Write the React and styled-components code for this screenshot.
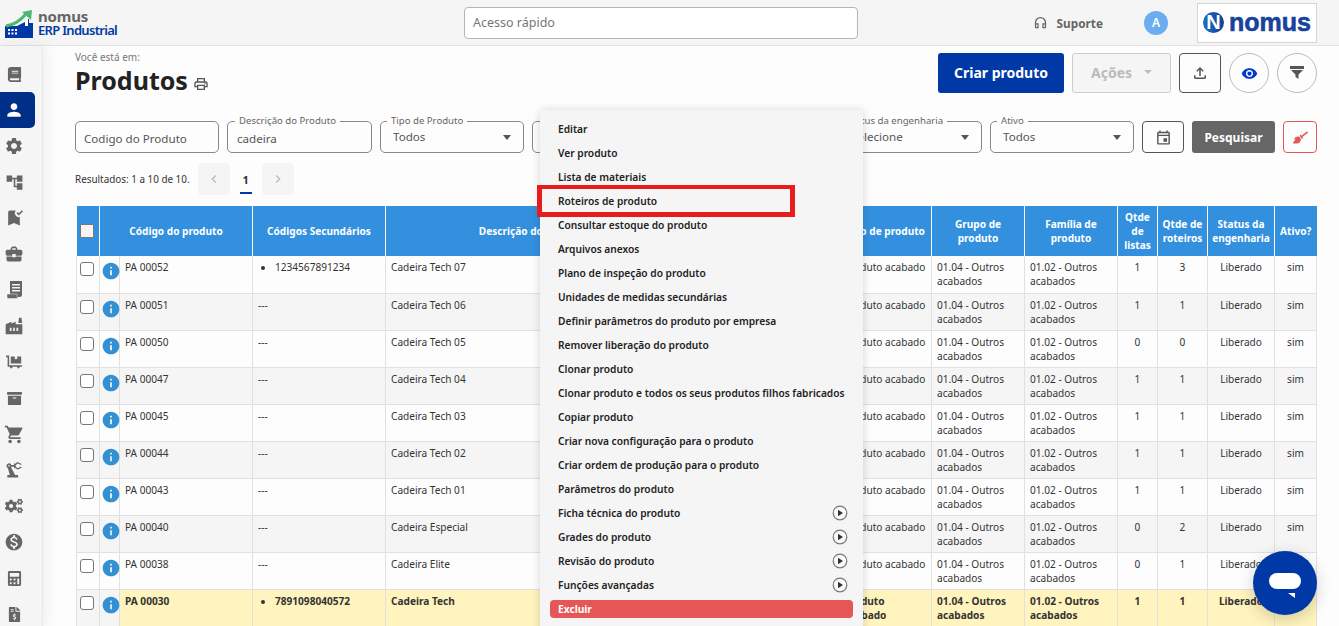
import styled, { createGlobalStyle } from "styled-components";
import {
  MdPerson,
  MdSettings,
  MdAccountTree,
  MdBookmarkAdded,
  MdBusinessCenter,
  MdFactory,
  MdShoppingCart,
  MdPrecisionManufacturing,
  MdMonetizationOn,
  MdOutlineHeadphones,
  MdOutlineFileUpload,
  MdVisibility,
  MdOutlineEvent,
  MdChevronLeft,
  MdChevronRight,
  MdOutlinePrint,
  MdInfo,
} from "react-icons/md";
import {
  FaBook,
  FaArchive,
  FaDollyFlatbed,
  FaCogs,
  FaCalculator,
  FaFileInvoiceDollar,
  FaBroom,
} from "react-icons/fa";

const blue = "#0039a6";
const font = `"Noto Sans", "Open Sans", sans-serif`;

const GlobalStyle = createGlobalStyle`
    html, body {
        margin: 0;
        padding: 0;
        overflow: hidden;
        background: #fdfdfd;
        font-family: ${font};
        color: #333;
    }
    * {
        box-sizing: border-box;
    }
`;

const Page = styled.div`
    position: relative;
    width: 1339px;
    height: 626px;
    overflow: hidden;
`;
const Header = styled.header`
    display: flex;
    align-items: center;
    height: 46px;
    padding: 0 22px 0 5px;
    background: #f5f5f5;
    border-bottom: 1px solid #e2e2e2;
`;
const Brand = styled.div`
    display: flex;
    align-items: center;
    gap: 5px;
    width: 459px;
    margin-top: 2px;
`;
const BrandText = styled.div`
    display: flex;
    flex-direction: column;
`;
const BrandName = styled.span`
    font-size: 15px;
    font-weight: 700;
    line-height: 13px;
    color: #666;
    letter-spacing: -0.2px;
`;
const BrandSub = styled.span`
    font-size: 13px;
    font-weight: 600;
    line-height: 14px;
    color: ${blue};
    letter-spacing: -0.7px;
`;
const QuickAccess = styled.div`
    width: 394px;
    height: 32px;
    padding: 0 0 1px 8px;
    display: flex;
    align-items: center;
    background: #fff;
    border: 1px solid #b5b5b5;
    border-radius: 4px;
    font-size: 12.5px;
    color: #777;
`;
const HeaderRight = styled.div`
    margin-left: auto;
    display: flex;
    align-items: center;
`;
const Support = styled.div`
    display: flex;
    align-items: center;
    gap: 9px;
    font-size: 11.8px;
    font-weight: 700;
    color: #666;
    svg {
        font-size: 15px;
    }
`;
const Avatar = styled.div`
    width: 24px;
    height: 24px;
    margin: 0 29px 0 41px;
    display: flex;
    align-items: center;
    justify-content: center;
    border-radius: 50%;
    background: #6aaef0;
    color: #fff;
    font-size: 12px;
    font-weight: 600;
`;
const CompanyLogo = styled.div`
    width: 120px;
    height: 40px;
    display: flex;
    align-items: center;
    gap: 5px;
    padding-left: 5px;
    background: #fff;
    border: 1px solid #d5d5d5;
`;
const LogoMark = styled.span`
    width: 21px;
    height: 21px;
    display: flex;
    align-items: center;
    justify-content: center;
    border-radius: 50%;
    background: linear-gradient(90deg, #1c6fc0, #123f94);
    color: #fff;
    font-family: "Liberation Sans", sans-serif;
    font-size: 20px;
    font-weight: 700;
`;
const LogoWord = styled.span`
    font-family: "Liberation Sans", sans-serif;
    font-size: 25px;
    font-weight: 700;
    color: #17439b;
    -webkit-text-stroke: 0.6px #17439b;
`;

const Body = styled.div`
    display: flex;
    height: 580px;
`;
const Sidebar = styled.nav`
    flex: 0 0 43px;
    padding-top: 10px;
    background: #f5f5f5;
    border-right: 1px solid #e8e8e8;
    box-shadow: 4px 0 14px rgba(0, 0, 0, 0.06);
    z-index: 1;
`;
const SideItem = styled.div`
    width: 35px;
    height: 36px;
    padding-right: 7px;
    display: flex;
    align-items: center;
    justify-content: center;
    font-size: ${(props) => props.$size || 18}px;
    color: ${(props) => (props.$active ? "#fff" : "#666")};
    background: ${(props) => (props.$active ? "#002f87" : "transparent")};
    border-radius: 0 5px 5px 0;
`;
const Main = styled.main`
    flex: 1;
    min-width: 0;
    padding: 7px 22px 0 32px;
    background: #fdfdfd;
`;
const PageHead = styled.div`
    display: flex;
    justify-content: space-between;
    height: 68px;
`;
const Crumb = styled.div`
    font-size: 10px;
    line-height: 9px;
    color: #777;
`;
const Title = styled.h1`
    margin: 1px 0 0;
    display: flex;
    align-items: center;
    gap: 5px;
    font-size: 25px;
    line-height: 34px;
    font-weight: 700;
    color: #222;
    svg {
        font-size: 16px;
        color: #555;
        margin-top: 7px;
    }
`;
const Actions = styled.div`
    display: flex;
    gap: 8px;
    height: 40px;
`;
const PrimaryButton = styled.button`
    width: 126px;
    padding: 0 0 2px;
    border: 0;
    border-radius: 3px;
    background: ${blue};
    color: #fff;
    font: 700 14px ${font};
`;
const DisabledButton = styled.button`
    width: 99px;
    padding: 0 0 2px;
    display: flex;
    align-items: center;
    justify-content: center;
    gap: 12px;
    border: 1px solid #ccc;
    border-radius: 3px;
    background: #f5f5f5;
    color: #bbb;
    font: 700 14px ${font};
`;
const IconButton = styled.button`
    width: ${(props) => props.$w || 42}px;
    height: ${(props) => props.$h || 40}px;
    padding: 0;
    display: flex;
    align-items: center;
    justify-content: center;
    background: transparent;
    border: 1px solid ${(props) => props.$line || "#555"};
    border-radius: ${(props) => (props.$round ? "50%" : "4px")};
    color: ${(props) => props.$color || "#555"};
    font-size: ${(props) => props.$size || 18}px;
`;

const Filters = styled.div`
    display: flex;
    gap: 8px;
    height: 32px;
`;
const Field = styled.div`
    position: relative;
    flex: 0 0 ${(props) => props.$w}px;
    height: 32px;
    display: flex;
    align-items: center;
    padding-left: ${(props) => props.$pad || 8}px;
    padding-top: ${(props) => (props.$select ? 0 : 2)}px;
    padding-bottom: ${(props) => (props.$select ? 1 : 0)}px;
    background: #fdfdfd;
    border: 1px solid #888;
    border-radius: 5px;
    font-size: 11.6px;
    color: #555;
`;
const FieldLabel = styled.span`
    position: absolute;
    top: -8px;
    left: ${(props) => props.$left || 6}px;
    padding: 0 4px;
    background: #fdfdfd;
    font-size: 9.6px;
    line-height: 14px;
    color: #666;
    white-space: nowrap;
`;
const Caret = styled.i`
    position: absolute;
    top: 13px;
    right: 12px;
    border-top: 5px solid #555;
    border-left: 4px solid transparent;
    border-right: 4px solid transparent;
`;
const InlineCaret = styled.i`
    border-top: 4px solid #bbb;
    border-left: 4px solid transparent;
    border-right: 4px solid transparent;
`;
const SearchButton = styled.button`
    flex: 0 0 83px;
    border: 0;
    border-radius: 3px;
    background: #666;
    color: #fff;
    font: 700 12px ${font};
`;

const Results = styled.div`
    display: flex;
    align-items: center;
    height: 32px;
    margin-top: 10px;
    font-size: 9.9px;
    color: #333;
`;
const PagerButton = styled.span`
    width: 32px;
    height: 32px;
    margin-left: ${(props) => props.$gap || 0}px;
    display: flex;
    align-items: center;
    justify-content: center;
    border-radius: 4px;
    background: #f5f5f5;
    color: #bbb;
    font-size: 16px;
`;
const PagerCurrent = styled.span`
    width: 32px;
    height: 32px;
    display: flex;
    align-items: center;
    justify-content: center;
    position: relative;
    font-size: 11px;
    font-weight: 700;
    color: #333;
    &::after {
        content: "";
        position: absolute;
        left: 10px;
        bottom: 1px;
        width: 12px;
        height: 2px;
        background: ${blue};
    }
`;

const Table = styled.table`
    width: 1240px;
    margin: 11px 0 0 1px;
    table-layout: fixed;
    border-collapse: collapse;
    font-size: 10.1px;
    line-height: 14px;
`;
const Th = styled.th`
    height: 50px;
    padding: 0 2px;
    background: #3390de;
    border-right: 1px solid #fff;
    color: #fff;
    font-weight: 700;
    text-align: center;
    &:last-child {
        border-right: 0;
    }
`;
const Tr = styled.tr`
    height: 37px;
    background: ${(props) => (props.$even ? "#f5f5f5" : "#fdfdfd")};
    border-bottom: 1px solid #e0e0e0;
`;
const Td = styled.td`
    padding: 4px 5px 0;
    vertical-align: top;
    border-right: 1px solid #e0e0e0;
    text-align: ${(props) => (props.$center ? "center" : "left")};
    font-weight: ${(props) => (props.$hl ? 700 : 400)};
    background: ${(props) => (props.$hl ? "#fff4bd" : "transparent")};
    overflow: hidden;
`;
const BoxCell = styled.td`
    padding: 6px 0 0 3px;
    vertical-align: top;
    border-right: 1px solid #e0e0e0;
    border-left: 1px solid #e0e0e0;
`;
const InfoCell = styled.td`
    padding: 5px 0 0 2px;
    vertical-align: top;
    border-right: 1px solid #e0e0e0;
    line-height: 0;
    color: #3390d3;
    font-size: 20px;
    svg {
        margin-left: -1px;
    }
`;
const Check = styled.span`
    display: block;
    width: 14px;
    height: 14px;
    background: ${(props) => (props.$head ? "#f5f5f5" : "#fff")};
    border: 1px solid #777;
    border-radius: ${(props) => (props.$head ? 1 : 3)}px;
`;
const HeadCheck = styled(Check)`
    margin-left: 1px;
`;
const CodeList = styled.ul`
    margin: 0;
    padding-left: 17px;
`;

const Menu = styled.div`
    position: absolute;
    top: 110px;
    left: 540px;
    width: 323px;
    height: 530px;
    padding-top: 7px;
    background: #f5f5f5;
    border-radius: 4px;
    box-shadow: 0 0 8px rgba(0, 0, 0, 0.16);
    z-index: 3;
`;
const MenuItem = styled.div`
    height: 24px;
    padding: 0 15px 0 18px;
    display: flex;
    align-items: center;
    justify-content: space-between;
    font-size: 10.2px;
    font-weight: 600;
    color: #222;
    white-space: nowrap;
`;
const DangerItem = styled.div`
    height: 18px;
    margin: 3px 10px 0;
    padding-left: 8px;
    display: flex;
    align-items: center;
    border-radius: 4px;
    background: #e55757;
    color: #fff;
    font-size: 10.2px;
    font-weight: 700;
`;
const Highlight = styled.div`
    position: absolute;
    top: 185px;
    left: 537px;
    width: 258px;
    height: 32px;
    border: 5px solid #e81c1c;
    border-top-width: 4px;
    z-index: 4;
`;
const ChatButton = styled.div`
    position: absolute;
    left: 1253px;
    top: 551px;
    width: 64px;
    height: 64px;
    display: flex;
    align-items: center;
    justify-content: center;
    padding-top: 6px;
    border-radius: 50%;
    background: ${blue};
    box-shadow: 0 4px 16px rgba(0, 0, 0, 0.18);
    z-index: 5;
`;

const BrandIcon = () => (
  <svg width="28" height="28" viewBox="0 0 28 28">
    <path d="M0 16h12l8-4v-3h4v4h4v15H0z" fill="#0039a6" />
    <path d="M20 9h3v7h-3z" fill="#fff" />
    <path d="M1 16C8 15 15 11 21 4" fill="none" stroke="#4fb573" strokeWidth="3" />
    <path d="M17 2l10-2-1 10z" fill="#4fb573" />
    <path d="M3 19h2v2H3zM6.500 19h2v2h-2zM10 19h2v2h-2zM3 22.500h2v2H3zM6.500 22.500h2v2h-2zM10 22.500h2v2h-2z" fill="#fff" />
  </svg>
);
const SubArrow = () => (
  <svg width="16" height="16" viewBox="0 0 16 16">
    <circle cx="8" cy="8" r="6.800" fill="#fafafa" stroke="#777" strokeWidth="1.200" />
    <path d="M6 4.800l5 3.200-5 3.200z" fill="#333" />
  </svg>
);
const ChatIcon = () => (
  <svg width="34" height="28" viewBox="0 0 34 28">
    <rect x="1" y="1" width="32" height="16" rx="8" fill="#fff" />
    <path d="M20 21h7v5z" fill="#fff" />
  </svg>
);
const FunnelIcon = () => (
  <svg width="14" height="14" viewBox="0 0 14 14" fill="#555">
    <path d="M0 0h14v3H0zM1 4h12L8.500 8.500V13l-3-2V8.500z" />
  </svg>
);
const NoteIcon = () => (
  <svg width="15" height="18" viewBox="0 0 15 18">
    <path d="M3 0h12v13.500a2.500 2.500 0 0 1-2.500 2.500H3z" fill="#666" />
    <path d="M5 3h8v1.500H5zM5 6h8v1.500H5zM5 9h8v1.500H5z" fill="#f5f5f5" />
    <path d="M0 13h10v2.500l1 2H1.500A1.500 1.500 0 0 1 0 16z" fill="#666" stroke="#f5f5f5" strokeWidth="0.500" />
  </svg>
);

const sideIcons = [
  [FaBook, 15],
  [MdPerson, 20],
  [MdSettings, 20],
  [MdAccountTree, 19],
  [MdBookmarkAdded, 20],
  [MdBusinessCenter, 20],
  [NoteIcon, 15],
  [MdFactory, 20],
  [FaDollyFlatbed, 16],
  [FaArchive, 15],
  [MdShoppingCart, 21],
  [MdPrecisionManufacturing, 20],
  [FaCogs, 18],
  [MdMonetizationOn, 20],
  [FaCalculator, 15],
  [FaFileInvoiceDollar, 15],
];

const columns = [23, 20, 133, 133, 294, 159, 93, 93, 93, 40, 50, 67, 42];

const rows = [
  ["PA 00052", "1234567891234", "Cadeira Tech 07", 1, 3],
  ["PA 00051", null, "Cadeira Tech 06", 1, 1],
  ["PA 00050", null, "Cadeira Tech 05", 0, 0],
  ["PA 00047", null, "Cadeira Tech 04", 1, 1],
  ["PA 00045", null, "Cadeira Tech 03", 1, 1],
  ["PA 00044", null, "Cadeira Tech 02", 1, 1],
  ["PA 00043", null, "Cadeira Tech 01", 1, 1],
  ["PA 00040", null, "Cadeira Especial", 0, 2],
  ["PA 00038", null, "Cadeira Elite", 0, 1],
  ["PA 00030", "7891098040572", "Cadeira Tech", 1, 1],
];

const menuItems = [
  "Editar",
  "Ver produto",
  "Lista de materiais",
  "Roteiros de produto",
  "Consultar estoque do produto",
  "Arquivos anexos",
  "Plano de inspeção do produto",
  "Unidades de medidas secundárias",
  "Definir parâmetros do produto por empresa",
  "Remover liberação do produto",
  "Clonar produto",
  "Clonar produto e todos os seus produtos filhos fabricados",
  "Copiar produto",
  "Criar nova configuração para o produto",
  "Criar ordem de produção para o produto",
  "Parâmetros do produto",
];
const subMenus = [
  "Ficha técnica do produto",
  "Grades do produto",
  "Revisão do produto",
  "Funções avançadas",
];

const App = () => {
  return (
    <Page>
      <GlobalStyle />
      <Header>
        <Brand>
          <BrandIcon />
          <BrandText>
            <BrandName>nomus</BrandName>
            <BrandSub>ERP Industrial</BrandSub>
          </BrandText>
        </Brand>
        <QuickAccess>Acesso rápido</QuickAccess>
        <HeaderRight>
          <Support>
            <MdOutlineHeadphones />
            Suporte
          </Support>
          <Avatar>A</Avatar>
          <CompanyLogo>
            <LogoMark>N</LogoMark>
            <LogoWord>nomus</LogoWord>
          </CompanyLogo>
        </HeaderRight>
      </Header>
      <Body>
        <Sidebar>
          {sideIcons.map(([Icon, size], i) => (
            <SideItem key={i} $size={size} $active={i === 1}>
              <Icon />
            </SideItem>
          ))}
        </Sidebar>
        <Main>
          <PageHead>
            <div>
              <Crumb>Você está em:</Crumb>
              <Title>
                Produtos <MdOutlinePrint />
              </Title>
            </div>
            <Actions>
              <PrimaryButton>Criar produto</PrimaryButton>
              <DisabledButton>
                Ações <InlineCaret />
              </DisabledButton>
              <IconButton $size={18}>
                <MdOutlineFileUpload />
              </IconButton>
              <IconButton $w={40} $round $line="#bbb" $color="#0039d0" $size={17}>
                <MdVisibility />
              </IconButton>
              <IconButton $w={40} $round $line="#bbb">
                <FunnelIcon />
              </IconButton>
            </Actions>
          </PageHead>
          <Filters>
            <Field $w={144}>Codigo do Produto</Field>
            <Field $w={145} $pad={9}>
              <FieldLabel $left={7}>Descrição do Produto</FieldLabel>
              cadeira
            </Field>
            <Field $w={144} $pad={12} $select>
              <FieldLabel>Tipo de Produto</FieldLabel>
              Todos
              <Caret />
            </Field>
            <Field $w={298} />
            <Field $w={144} $pad={12} $select>
              <FieldLabel $left={4}>Status da engenharia</FieldLabel>
              Selecione
              <Caret />
            </Field>
            <Field $w={144} $pad={12} $select>
              <FieldLabel>Ativo</FieldLabel>
              Todos
              <Caret />
            </Field>
            <IconButton $h={32} $size={17}>
              <MdOutlineEvent />
            </IconButton>
            <SearchButton>Pesquisar</SearchButton>
            <IconButton $w={34} $h={32} $line="#e55757" $color="#e55757" $size={15}>
              <FaBroom />
            </IconButton>
          </Filters>
          <Results>
            Resultados: 1 a 10 de 10.
            <PagerButton $gap={8}>
              <MdChevronLeft />
            </PagerButton>
            <PagerCurrent>1</PagerCurrent>
            <PagerButton>
              <MdChevronRight />
            </PagerButton>
          </Results>
          <Table>
            <colgroup>
              {columns.map((w, i) => (
                <col key={i} style={{ width: w }} />
              ))}
            </colgroup>
            <thead>
              <tr>
                <Th>
                  <HeadCheck $head />
                </Th>
                <Th colSpan={2}>Código do produto</Th>
                <Th>Códigos Secundários</Th>
                <Th>Descrição do produto</Th>
                <Th />
                <Th>Tipo de produto</Th>
                <Th>Grupo de produto</Th>
                <Th>Família de produto</Th>
                <Th>Qtde de listas</Th>
                <Th>Qtde de roteiros</Th>
                <Th>Status da engenharia</Th>
                <Th>Ativo?</Th>
              </tr>
            </thead>
            <tbody>
              {rows.map(([code, second, name, lists, routes], i) => {
                const hl = i === 9;
                return (
                  <Tr key={code} $even={i % 2 === 1}>
                    <BoxCell>
                      <Check />
                    </BoxCell>
                    <InfoCell>
                      <MdInfo />
                    </InfoCell>
                    <Td $hl={hl}>{code}</Td>
                    <Td $hl={hl}>
                      {second ? (
                        <CodeList>
                          <li>{second}</li>
                        </CodeList>
                      ) : (
                        "---"
                      )}
                    </Td>
                    <Td $hl={hl}>{name}</Td>
                    <Td $hl={hl} />
                    <Td $hl={hl}>Produto acabado</Td>
                    <Td $hl={hl}>01.04 - Outros acabados</Td>
                    <Td $hl={hl}>01.02 - Outros acabados</Td>
                    <Td $hl={hl} $center>
                      {lists}
                    </Td>
                    <Td $hl={hl} $center>
                      {routes}
                    </Td>
                    <Td $hl={hl} $center>
                      Liberado
                    </Td>
                    <Td $hl={hl} $center>
                      sim
                    </Td>
                  </Tr>
                );
              })}
            </tbody>
          </Table>
        </Main>
      </Body>
      <Menu>
        {menuItems.map((label) => (
          <MenuItem key={label}>{label}</MenuItem>
        ))}
        {subMenus.map((label) => (
          <MenuItem key={label}>
            {label}
            <SubArrow />
          </MenuItem>
        ))}
        <DangerItem>Excluir</DangerItem>
      </Menu>
      <Highlight />
      <ChatButton>
        <ChatIcon />
      </ChatButton>
    </Page>
  );
};

export default App;
